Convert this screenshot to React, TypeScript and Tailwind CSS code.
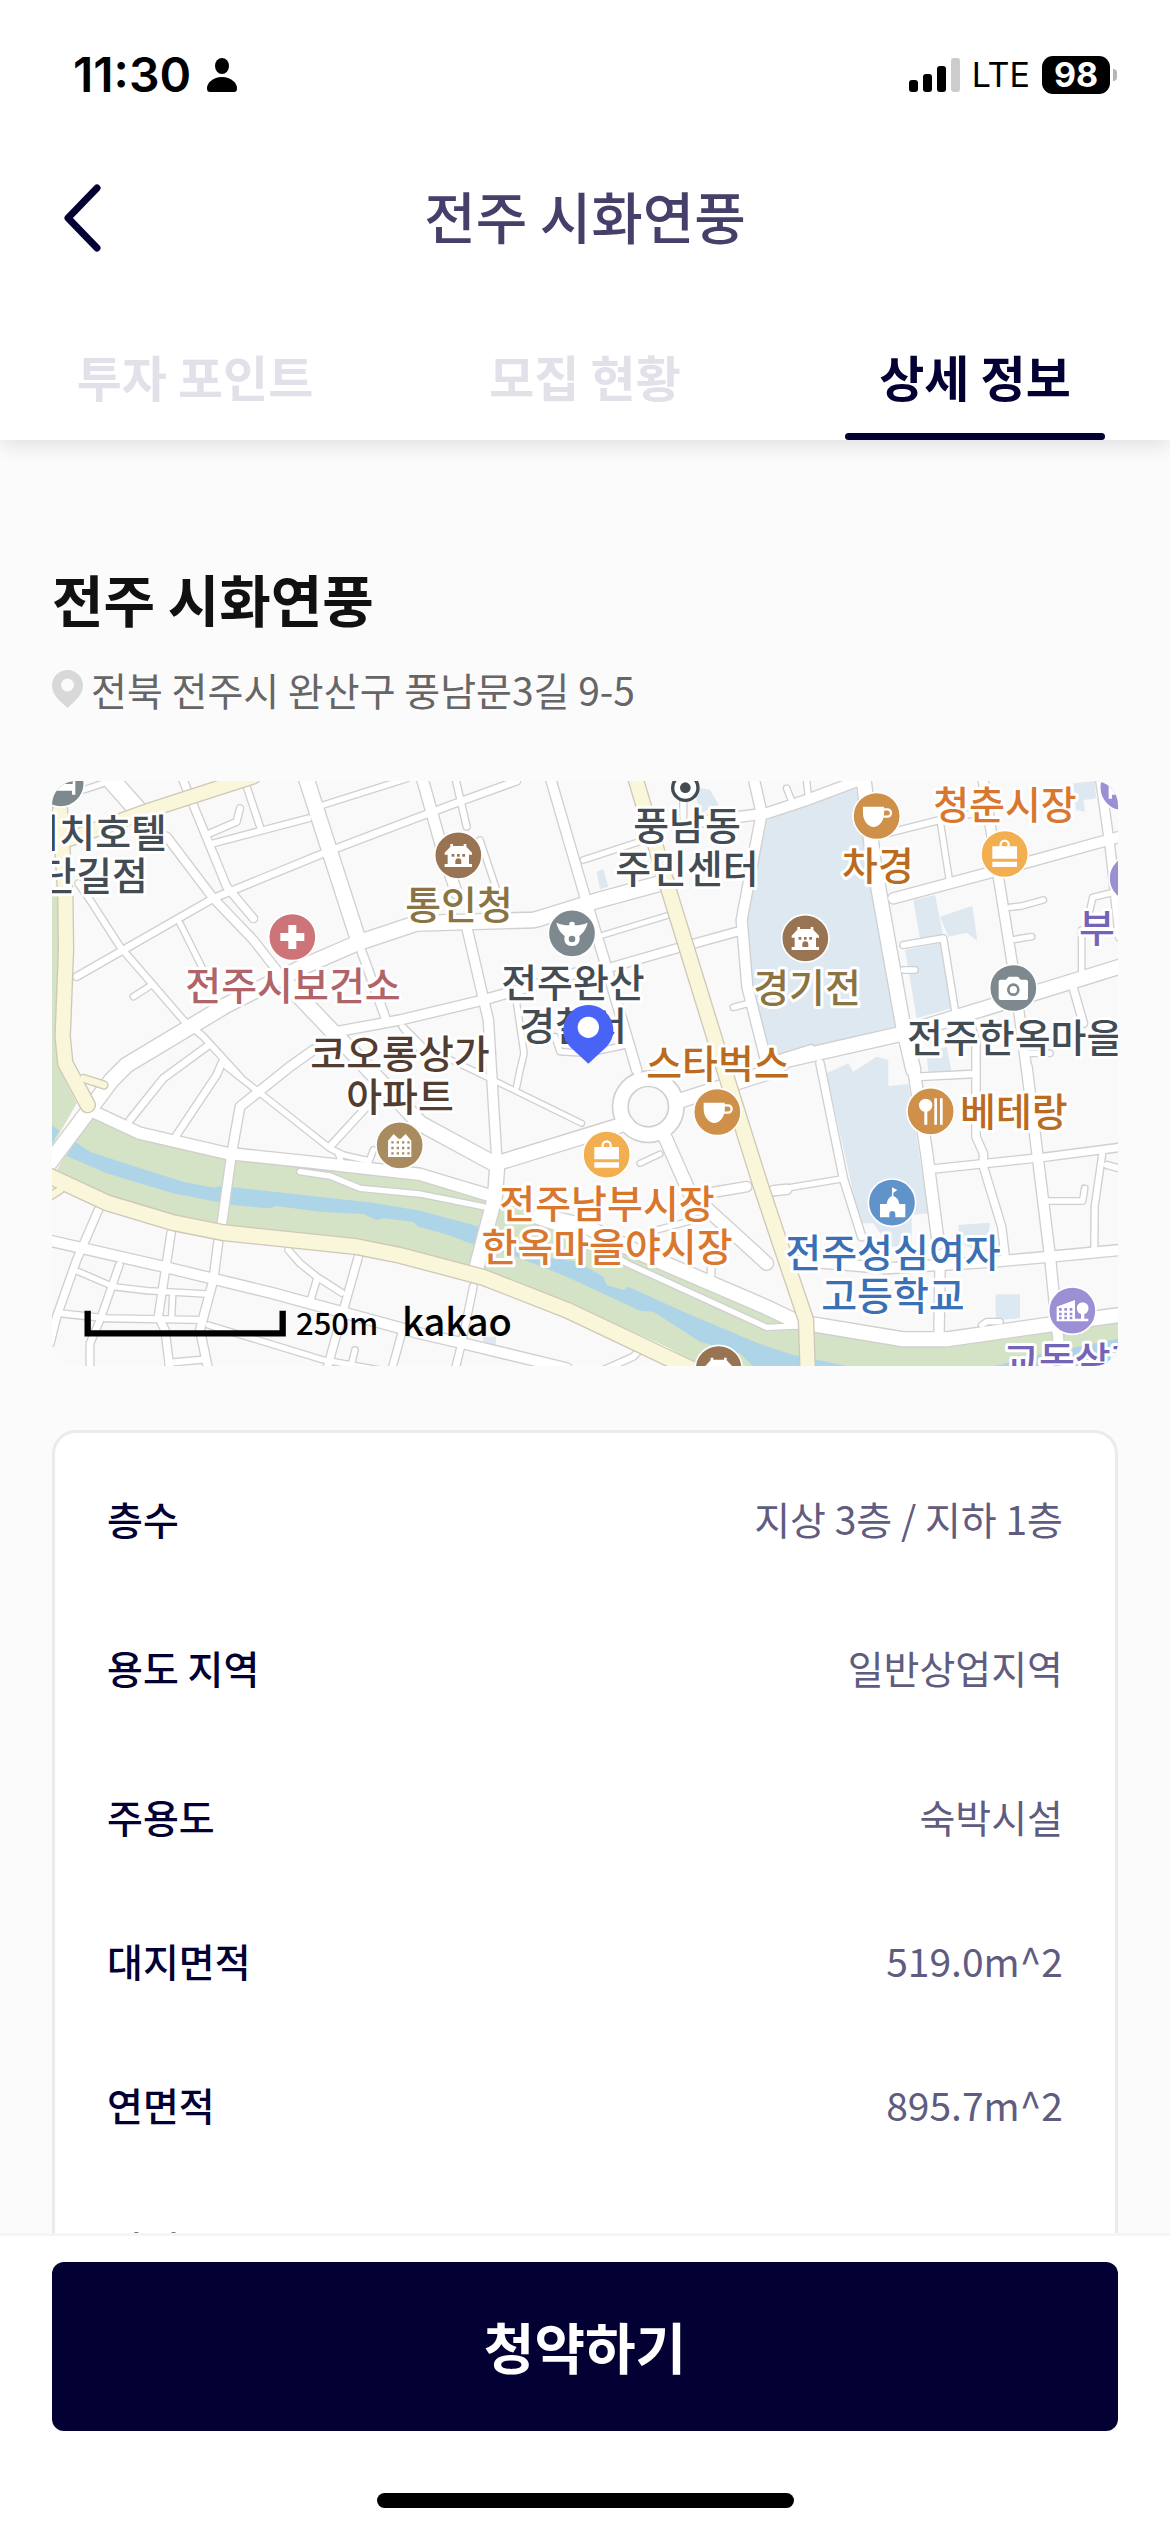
import React, { useState } from 'react'

const TABS = ['투자 포인트', '모집 현황', '상세 정보']

interface IDetail {
  label: string
  value: string
  tall?: boolean
}

const DETAILS: IDetail[] = [
  { label: '층수', value: '지상 3층 / 지하 1층', tall: true },
  { label: '용도 지역', value: '일반상업지역', tall: true },
  { label: '주용도', value: '숙박시설' },
  { label: '대지면적', value: '519.0m^2' },
  { label: '연면적', value: '895.7m^2' },
  { label: '건폐율', value: '' },
]

// map roads: [width, path]
const ROADS: [number, string][] = [
  [18, 'M130 60 190 40'],
  [22, 'M110 620 520 385 850 250 1140 140 1260 95 1430 33'],
  [18, 'M850 105 1100 26'],
  [24, 'M425 20 560 350 640 445'],
  [20, 'M510 190 590 155 600 115'],
  [20, 'M520 220 805 145'],
  [20, 'M620 50 660 170'],
  [20, 'M115 340 150 390 240 530 430 750 490 800 600 920'],
  [18, 'M280 680 335 645'],
  [18, 'M420 460 490 600'],
  [26, 'M380 200 520 385 640 510 710 600'],
  [26, 'M965 545 1035 740'],
  [16, 'M1085 770 1140 840'],
  [22, 'M270 1050 370 925 500 830'],
  [22, 'M545 880 530 915 410 1095'],
  [18, 'M560 890 870 1135 910 1155 985 1172'],
  [18, 'M895 1150 905 1180M985 1180 1000 1140'],
  [22, 'M980 1010 870 1130'],
  [28, 'M820 840 750 890 600 1010 575 1150 545 1365'],
  [34, 'M1145 20 1210 250 1250 370'],
  [20, 'M1245 20 1280 170'],
  [18, 'M1320 210 1370 360'],
  [30, 'M1530 20 1635 380 1690 560 1790 900'],
  [18, 'M1630 270 1860 195'],
  [16, 'M1690 495 1880 437'],
  [26, 'M1720 590 1910 535 2110 480'],
  [30, 'M890 785 1080 750 1330 690 1640 600'],
  [30, 'M1280 470 1345 750 1370 1160'],
  [18, 'M1430 700 1452 850 1440 900 1430 950'],
  [16, 'M1090 770 1150 830 1380 940 1625 1060'],
  [18, 'M1545 800 1560 845 1640 850 1760 825'],
  [16, 'M1800 1180 1860 1152'],
  [20, 'M1930 90 1930 140'],
  [32, 'M2140 20 2165 130 2105 450 2122 650 2180 880'],
  [32, 'M1980 155 2180 130 2300 90 2460 30'],
  [18, 'M2080 712 2125 700'],
  [18, 'M2240 55 2262 110M2300 33 2305 80'],
  [20, 'M2540 190 2700 150 2830 125'],
  [18, 'M2700 150 2728 330'],
  [32, 'M2560 385 2860 305 3240 200'],
  [30, 'M2828 20 2875 320 2920 600 2960 900'],
  [28, 'M3180 20 3210 230 3240 500'],
  [20, 'M2590 525 2710 505 2745 720'],
  [18, 'M2910 412 2945 408 3010 390M2925 508 2975 500M2590 600 2625 600'],
  [18, 'M3150 420 3158 382 3240 362M3125 480 3125 610'],
  [24, 'M3100 655 3130 760'],
  [18, 'M2970 850 3030 850'],
  [16, 'M2220 862 2315 832'],
  [24, 'M2340 880 2410 1225 2465 1400'],
  [18, 'M2195 1262 2410 1226'],
  [22, 'M2645 920 2800 912'],
  [24, 'M2785 740 2808 820 2808 1100 2830 1150 2830 1190 2885 1370 2897 1470'],
  [24, 'M2680 1197 3010 1162 3240 1132'],
  [20, 'M3187 1150 3164 1310 3163 1440M3200 1185 3240 1196'],
  [18, 'M3025 1293 3128 1293 3134 1255'],
  [30, 'M2700 1500 2697 1690'],
  [18, 'M2825 1665 2840 1655 2880 1655'],
  [32, 'M2960 890 3030 1460 3055 1710'],
  [32, 'M2250 1470 2540 1495 2860 1475 3030 1460 3240 1440'],
  [22, 'M2015 1460 2012 1540'],
  [18, 'M1850 1380 1980 1345'],
  [30, 'M1990 1272 2120 1250M2200 1262 2240 1258'],
  [32, 'M20 1410 370 1490 700 1570 1140 1690 1270 1720 1580 1795'],
  [24, 'M175 1320 110 1470 50 1640 30 1720'],
  [22, 'M238 1485 180 1650 150 1720 150 1800'],
  [24, 'M393 1390 355 1640 375 1680 390 1800'],
  [26, 'M535 1415 520 1530 480 1680 505 1800'],
  [18, 'M115 1505 220 1550 320 1562 500 1572'],
  [20, 'M60 1630 200 1645 490 1650M385 1778 500 1768'],
  [18, 'M398 1575 395 1640'],
  [18, 'M505 1665 850 1770 1020 1800'],
  [20, 'M745 1440 780 1480 830 1520 905 1568M830 1530 812 1590'],
  [24, 'M955 1460 860 1800'],
  [18, 'M945 1740 935 1780'],
  [22, 'M1085 1690 1055 1800'],
  [22, 'M1300 1550 1265 1720M1265 1720 1245 1800'],
  [20, 'M1690 1800 1780 1760 1800 1740'],
  [46, 'M797 20 955 510'],
  [54, 'M205 20 320 150'],
  [46, 'M740 640 1140 1060 1370 1185'],
  [46, 'M20 1190 215 930 260 885 560 705 800 585 950 520 1130 460 1480 450 1500 445 1660 395 1880 335'],
  [44, 'M2470 20 2500 270 2590 770 2620 900'],
  [36, 'M2620 890 2660 1150 2695 1420'],
  [44, 'M1910 995 2190 905 2240 870 2590 790 2850 710 3240 590'],
  [40, 'M1870 1090 1950 1270 2180 1480'],
  [44, 'M1370 1180 1760 1060'],
  [44, 'M1373 1170 1365 1280 1310 1490'],
  [36, 'M160 1025 300 1090 560 1150 800 1175 1140 1213 1345 1275'],
  [44, 'M1500 1335 1640 1370 1780 1440 2180 1612 2270 1655 2590 1708 2720 1708 3020 1665 3240 1635'],
  [18, 'M780 1205 870 1218 960 1255 1140 1272 1330 1310'],
  [18, 'M1480 1350 1630 1400 1760 1480 2180 1672 2270 1668'],
]

const MAIN_ROADS: [number, string][] = [
  [42, 'M66 215 330 120 640 20'],
  [44, 'M60 120 76 375 78 540 68 800 76 880 143 1005'],
  [22, 'M130 925 192 945'],
  [22, 'M20 1285 60 1260'],
  [46, 'M0 1205 200 1298 400 1358 550 1388 950 1430 1080 1456 1330 1522 1580 1620 1960 1800'],
  [44, 'M1785 20 1880 340 2050 890 2160 1240 2210 1390 2298 1650 2303 1800'],
]

const SCHOOL_LAND = [
  'M2180 150 2280 110 2445 45 2505 340 2580 765 2260 850 2190 860 2120 600 2120 450Z',
  'M2620 390 2685 375 2710 500 2640 505Z',
  'M2700 440 2797 407 2812 512 2780 488 2725 500Z',
  'M2595 540 2700 520 2735 715 2630 745Z',
  'M2360 910 2425 880 2440 905 2510 860 2545 870 2545 948 2605 942 2665 1330 2615 1335 2615 1430 2550 1430 2500 1360 2460 1360Z',
  'M3100 40 3165 33 3168 85 3130 90 3135 125 3108 120Z',
  'M2660 850 2720 830 2735 905 2665 910Z',
  'M2755 1365 2850 1358 2845 1410 2795 1435 2760 1420Z',
  'M2867 1573H2940V1645L2867 1650Z',
  'M1960 50 2010 60 2037 105 1980 130Z',
  'M1670 305 1690 297 1705 350 1680 358Z',
  'M1330 1700H1368V1730H1330Z',
]

type PinKind = 'cross' | 'palace' | 'police' | 'cup' | 'bag' | 'camera' | 'flats' | 'food' | 'school' | 'town' | 'hotel'

const PINS: { kind: PinKind; x: number; y: number; color: string }[] = [
  { kind: 'hotel', x: 62, y: 40, color: '#7d888f' },
  { kind: 'cross', x: 757, y: 501, color: '#cd7478' },
  { kind: 'palace', x: 1255, y: 256, color: '#987453' },
  { kind: 'police', x: 1596, y: 490, color: '#7d888f' },
  { kind: 'cup', x: 2510, y: 138, color: '#cf904a' },
  { kind: 'bag', x: 2894, y: 252, color: '#f2ae4f' },
  { kind: 'hotel', x: 3250, y: 52, color: '#9c8fd4' },
  { kind: 'hotel', x: 3278, y: 325, color: '#9c8fd4' },
  { kind: 'palace', x: 2296, y: 505, color: '#987453' },
  { kind: 'camera', x: 2920, y: 654, color: '#7d888f' },
  { kind: 'flats', x: 1079, y: 1126, color: '#a88c60' },
  { kind: 'bag', x: 1700, y: 1154, color: '#f2ae4f' },
  { kind: 'cup', x: 2032, y: 1026, color: '#cf904a' },
  { kind: 'food', x: 2672, y: 1024, color: '#cf904a' },
  { kind: 'school', x: 2556, y: 1298, color: '#6193cb' },
  { kind: 'town', x: 3097, y: 1622, color: '#9c8fd4' },
  { kind: 'palace', x: 2036, y: 1797, color: '#987453' },
]

const LABELS: { text: string; x: number; y: number; color: string; anchor?: 'start' | 'end' }[] = [
  { text: '리치호텔', x: 115, y: 66, color: '#434c53', anchor: 'end' },
  { text: '단길점', x: 96, y: 109, color: '#434c53', anchor: 'end' },
  { text: '전주시보건소', x: 241, y: 219, color: '#b06468' },
  { text: '통인청', x: 407, y: 138, color: '#8b7443' },
  { text: '풍남동', x: 635, y: 59, color: '#434c53' },
  { text: '주민센터', x: 635, y: 102, color: '#434c53' },
  { text: '전주완산', x: 521, y: 216, color: '#434c53' },
  { text: '경찰서', x: 521, y: 259, color: '#434c53' },
  { text: '코오롱상가', x: 348, y: 287, color: '#533c30' },
  { text: '아파트', x: 348, y: 330, color: '#533c30' },
  { text: '스타벅스', x: 666, y: 297, color: '#bb6b20' },
  { text: '차경', x: 826, y: 99, color: '#bb6b20' },
  { text: '청춘시장', x: 953, y: 38, color: '#d9772f' },
  { text: '부', x: 1027, y: 161, color: '#7364b8', anchor: 'start' },
  { text: '경기전', x: 755, y: 221, color: '#8b7443' },
  { text: '전주한옥마을', x: 855, y: 271, color: '#434c53', anchor: 'start' },
  { text: '전주남부시장', x: 555, y: 437, color: '#d9772f' },
  { text: '한옥마을야시장', x: 555, y: 480, color: '#d9772f' },
  { text: '베테랑', x: 908, y: 345, color: '#bb6b20', anchor: 'start' },
  { text: '전주성심여자', x: 841, y: 486, color: '#3b70b5' },
  { text: '고등학교', x: 841, y: 529, color: '#3b70b5' },
  { text: '교동살래', x: 951, y: 594, color: '#7364b8', anchor: 'start' },
]

const PinGlyph = ({ kind, color }: { kind: PinKind; color: string }) => {
  switch (kind) {
    case 'cross':
      return <path d="M-12-36H12V-12H36V12H12V36H-12V12H-36V-12H-12Z" />
    case 'palace':
      return (
        <g>
          <path d="M-24-34h8v6h32v-6h8v8l17 18v6h-9v28h9v9h-82v-9h9V-2h-9v-6l17-18Z" />
          <path fill={color} d="M-20-4h8v8h-8ZM-4-4h8v8h-8ZM12-4h8v8h-8ZM-9 26V18a9 9 0 0 1 18 0v8Z" />
        </g>
      )
    case 'police':
      return (
        <g>
          <path d="M-47-32C-34-26-20-24-8-24V-32Q0-38 8-32V-24C20-24 34-26 47-32 42-12 34-2 22 8 26 28 16 38 0 38S-26 28-22 8C-34-2-42-12-47-32Z" />
          <circle cy="17" r="10" fill={color} />
        </g>
      )
    case 'cup':
      return (
        <g>
          <path d="M-41-28H22Q24-20 22-4C20 18 6 32-9 33-26 33-41 14-41-8Z" />
          <path d="M20-20H32a11 11 0 0 1 0 22H18" fill="none" stroke="white" strokeWidth="7" />
        </g>
      )
    case 'bag':
      return (
        <g>
          <path d="M-37-23H37V14H-37ZM-37 23H37V39H-37Z" />
          <path d="M-12-22v-6a12 12 0 0 1 24 0v6" fill="none" stroke="white" strokeWidth="7" />
        </g>
      )
    case 'camera':
      return (
        <g>
          <path d="M-38-25h16l8-9H14l8 9H38q6 0 6 6V29q0 7-6 7H-38q-6 0-6-7V-19q0-6 6-6Z" />
          <circle cy="5" r="15" fill="white" stroke={color} strokeWidth="8" />
        </g>
      )
    case 'flats':
      return (
        <g>
          <path d="M-35 35V-14L-18-34-3-20H3L18-34 35-14V35Z" />
          <path stroke={color} strokeWidth="7" strokeDasharray="7 9" d="M-25-9H30M-25 8H30M-25 24H30" />
        </g>
      )
    case 'food':
      return (
        <g>
          <circle cx="-15" cy="-18" r="20" />
          <path d="M-19-4h9V40h-9ZM11-39h8V40h-8ZM28-39h8V40h-8Z" />
        </g>
      )
    case 'school':
      return (
        <g>
          <path d="M0-46 16-38 4-30V-20Q20-14 22 4H40V44H10V34a9 9 0 0 0-18 0V44H-36V4H-16Q-14-14 0-20Z" />
        </g>
      )
    case 'town':
      return (
        <g>
          <path d="M-47 26V-12L8-32V24H26V10a18 18 0 1 1 10 0V24H48V32H-47Z" />
          <path stroke={color} strokeWidth="8" strokeDasharray="8 8" d="M-40-4H4M-40 10H4M-40 22H4" />
        </g>
      )
    default:
      return <path d="M-44 14V-20H-30V2H36V-24H44V34H34V22H-34V34H-44Z" />
  }
}

const LocationMap = () => (
  <div className="overflow-hidden rounded-[24px]">
    <svg viewBox="0 0 1066 585" role="img" aria-label="전주 시화연풍 위치 지도" className="block w-full bg-[#f9f9f9]">
      <g transform="translate(-12 -11) scale(0.33333)" fill="none" strokeLinejoin="round" strokeLinecap="round">
        <g fill="#dee8f0">
          {SCHOOL_LAND.map((d) => <path key={d} d={d} />)}
        </g>
        {/* riverside park and stream */}
        <path fill="#d4e2c6" d="M30 375H60V900L110 1000 30 1140Z" />
        <path
          fill="#d4e2c6"
          d="M150 1030 250 1085 400 1130 560 1168 800 1190 1140 1225 1330 1285 1500 1330 1630 1375 1780 1450 2180 1625 2270 1660 2590 1720 2720 1720 3020 1680 3240 1650V1800H2000L1880 1730 1580 1600 1330 1500 1080 1435 950 1405 550 1370 400 1335 200 1275 50 1200Z"
        />
        <path fill="#aed4e8" d="M30 1060 58 1082 30 1130Z" />
        <path
          fill="#aed4e8"
          d="M105 1115 150 1145 300 1195 430 1235 520 1253 545 1248 700 1265 1000 1298 1140 1322 1310 1368 1440 1430 1510 1460 1610 1475 1690 1520 1700 1545 1750 1560 1765 1550 1940 1630 2160 1722 2260 1755 2480 1800H2150L2100 1750 1980 1715 1840 1625 1800 1622 1580 1520 1430 1460 1290 1420 1225 1395 1135 1370 1120 1355 1030 1345 1010 1350 970 1332 840 1325 710 1308 685 1315 580 1305 400 1270 200 1210 80 1158Z"
        />
        <path fill="#aed4e8" d="M2820 1800 2990 1755 3240 1705V1800Z" />
        {ROADS.map(([w, d]) => <path key={d} d={d} stroke="#d0d0d0" strokeWidth={w + 6} />)}
        <circle cx="1825" cy="1010" r="84" stroke="#d0d0d0" strokeWidth="52" />
        {ROADS.map(([w, d]) => <path key={d} d={d} stroke="white" strokeWidth={w - 2} />)}
        <circle cx="1825" cy="1010" r="84" stroke="white" strokeWidth="42" />
        {MAIN_ROADS.map(([w, d]) => <path key={d} d={d} stroke="#cfc8b8" strokeWidth={w + 6} />)}
        {MAIN_ROADS.map(([w, d]) => <path key={d} d={d} stroke="#f9f6d9" strokeWidth={w - 2} />)}
      </g>

      <g
        fontSize="39"
        strokeWidth="6"
        stroke="white"
        strokeLinejoin="round"
        className="font-medium [paint-order:stroke]"
      >
        {LABELS.map((l) => (
          <text key={l.text} x={l.x} y={l.y} fill={l.color} textAnchor={l.anchor ?? 'middle'}>
            {l.text}
          </text>
        ))}
      </g>

      <g transform="translate(-12 -11) scale(0.33333)" fill="white">
        {PINS.map((p) => (
          <g key={`${p.x}-${p.y}`} transform={`translate(${p.x} ${p.y})`}>
            <circle r="71" fill={p.color} stroke="white" strokeWidth="5" />
            <PinGlyph kind={p.kind} color={p.color} />
          </g>
        ))}
        <circle cx="1936" cy="53" r="38" stroke="#434c53" strokeWidth="10" />
        <circle cx="1936" cy="53" r="16" fill="#434c53" />
        {/* the building itself */}
        <path fill="#4a63f7" d="M1645 705c42 0 75 34 75 76 0 22-10 40-24 53L1645 881 1594 834c-14-13-24-31-24-53 0-42 33-76 75-76Z" />
        <circle cx="1645" cy="772" r="32" />
        <path d="M143 1622V1690H728V1622" fill="none" stroke="black" strokeWidth="19" />
      </g>

      <g fill="black" className="font-medium">
        <text x="244" y="554" fontSize="31">250m</text>
        <text x="350" y="555" fontSize="38">kakao</text>
      </g>
    </svg>
  </div>
)

const StatusBar = () => (
  <div className="flex items-center justify-between pt-[47px] pb-[45px] pr-[53px] pl-[73px] font-['Inter',sans-serif] text-black">
    <div className="flex items-center gap-4">
      <span className="text-[48px] leading-[56px] font-semibold">11:30</span>
      <svg width="30" height="34" viewBox="0 0 30 34" aria-hidden="true">
        <ellipse cx="15" cy="8" rx="7" ry="8" />
        <path d="M15 19c9 0 15 6 15 11 0 3-1 4-3 4H3c-2 0-3-1-3-4C0 25 6 19 15 19Z" />
      </svg>
    </div>
    <div className="flex items-center">
      <svg width="51" height="34" viewBox="0 0 51 34" aria-hidden="true">
        <rect y="22" width="9" height="12" rx="3" />
        <rect x="14" y="16" width="9" height="18" rx="3" />
        <rect x="28" y="8" width="9" height="26" rx="3" />
        <rect x="42" width="9" height="34" rx="3" fill="#cccccc" />
      </svg>
      <span className="ml-3 text-[34px] leading-[56px]">LTE</span>
      <span className="ml-3 flex h-[38px] w-[68px] items-center justify-center rounded-[11px] bg-black text-[34px] leading-none font-bold text-white">
        98
      </span>
      <span className="ml-[3px] h-[12px] w-[4px] rounded-r-full bg-[#b5b5b5]" />
    </div>
  </div>
)

const App = () => {
  const [active, setActive] = useState(2)

  return (
    <div className="flex h-screen flex-col bg-[#fbfbfb] font-['Noto_Sans_CJK_KR',sans-serif]">
      <header className="relative z-10 bg-white shadow-[0_6px_18px_rgba(0,0,0,0.1)]">
        <StatusBar />
        <div className="grid grid-cols-[1fr_auto_1fr] items-center px-[60px] pt-[27px] pb-[33px]">
          <button type="button" aria-label="뒤로" className="justify-self-start">
            <svg width="45" height="74" viewBox="0 0 45 74" fill="none" aria-hidden="true">
              <path d="M37 10 8 40 37 70" stroke="#030033" strokeWidth="7" strokeLinecap="round" strokeLinejoin="round" />
            </svg>
          </button>
          <h1 className="text-[56px] leading-[80px] font-medium text-[#444069]">전주 시화연풍</h1>
        </div>
        <nav className="grid grid-cols-3">
          {TABS.map((tab, i) => (
            <button
              key={tab}
              type="button"
              onClick={() => setActive(i)}
              className={
                i === active
                  ? 'flex flex-col items-center text-[49px] leading-[72px] font-bold text-[#030033]'
                  : 'flex flex-col items-center text-[49px] leading-[72px] font-bold text-[#e2e1e9]'
              }
            >
              <span className="pt-[52px] pb-[21px]">{tab}</span>
              <span className={i === active ? 'h-[7px] w-2/3 rounded-full bg-[#030033]' : 'h-[7px] w-2/3'} />
            </button>
          ))}
        </nav>
      </header>

      <main className="min-h-0 flex-1 overflow-y-auto px-[52px] pt-[122px] [scrollbar-width:none]">
        <h2 className="text-[56px] leading-[72px] font-bold text-[#111111]">전주 시화연풍</h2>
        <p className="mt-[26px] mb-[63px] flex items-center gap-2 text-[39px] leading-[58px] text-[#666666]">
          <svg width="31" height="38" viewBox="0 0 31 38" aria-hidden="true">
            <path fill="#d8d8d8" fillRule="evenodd" d="M15.500 0C24 0 31 7 31 15.500 31 25 22 32 15.500 38 9 32 0 25 0 15.500 0 7 7 0 15.500 0ZM15.500 8.500a6.500 6.500 0 1 0 0 13 6.500 6.500 0 0 0 0-13Z" />
          </svg>
          전북 전주시 완산구 풍남문3길 9-5
        </p>
        <LocationMap />
        <dl className="mt-[64px] rounded-[24px] border-[3px] border-[#ebebeb] bg-white px-[52px] pt-[56px]">
          {DETAILS.map((item) => (
            <div
              key={item.label}
              className={
                item.tall
                  ? 'flex justify-between pb-[91px] text-[39px] leading-[58px]'
                  : 'flex justify-between pb-[86px] text-[39px] leading-[58px]'
              }
            >
              <dt className="font-medium text-[#030033]">{item.label}</dt>
              <dd className="text-[#5f5c80]">{item.value}</dd>
            </div>
          ))}
        </dl>
      </main>

      <footer className="relative z-10 border-t-[3px] border-[#f5f5f5] bg-white px-[52px] pt-[26px] pb-[24px]">
        <button
          type="button"
          className="w-full rounded-[12px] bg-[#030033] pt-[43px] pb-[46px] text-[55px] leading-[80px] font-bold text-white"
        >
          청약하기
        </button>
        <div className="mx-auto mt-[62px] h-[15px] w-[417px] rounded-full bg-black" />
      </footer>
    </div>
  )
}

export default App
